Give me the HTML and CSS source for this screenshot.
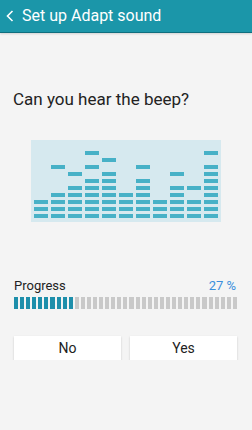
FILE: index.html
```html
<!DOCTYPE html>
<html>
<head>
    <title>Set up Adapt sound</title>
    <meta charset="UTF-8">
    <meta name="viewport" content="width=device-width, initial-scale=1.0">
    <link rel="stylesheet" href="styles.css">
</head>
<body>
    <div class="header">
        <svg class="back" width="10" height="12" viewBox="0 0 10 12">
            <path d="M7.5 1 L2.5 6 L7.5 11" fill="none" stroke="#fff" stroke-width="1.6"/>
        </svg>
        <span class="header-title">Set up Adapt sound</span>
    </div>

    <div class="content">
        <h1 class="question">Can you hear the beep?</h1>

        <div class="equalizer" id="equalizer"></div>

        <div class="progress-label">
            <span>Progress</span>
            <span class="percent">27 %</span>
        </div>
        <div class="progress" id="progress"></div>

        <div class="buttons">
            <button class="btn">No</button>
            <button class="btn">Yes</button>
        </div>
    </div>

    <script>
        // filled rows (from bottom) for each column
        var columns = [
            [0, 1, 2],
            [0, 1, 2, 3, 7],
            [0, 1, 2, 3, 4, 6],
            [0, 1, 2, 3, 4, 5, 7, 9],
            [0, 1, 2, 3, 4, 5, 6, 8],
            [0, 1, 2, 3],
            [0, 1, 2, 3, 4, 5, 7],
            [0, 1, 2],
            [0, 1, 2, 3, 4, 6],
            [0, 1, 2, 4],
            [0, 1, 2, 3, 4, 5, 6, 7, 9]
        ];
        var eq = document.getElementById('equalizer');
        columns.forEach(function(rows) {
            var col = document.createElement('div');
            col.className = 'eq-col';
            for (var i = 0; i < 10; i++) {
                var cell = document.createElement('div');
                cell.className = rows.indexOf(i) >= 0 ? 'eq-cell on' : 'eq-cell';
                col.appendChild(cell);
            }
            eq.appendChild(col);
        });

        var progress = document.getElementById('progress');
        for (var s = 0; s < 37; s++) {
            var seg = document.createElement('div');
            seg.className = s < 10 ? 'seg done' : 'seg';
            progress.appendChild(seg);
        }
    </script>
</body>
</html>
```

FILE: styles.css
```css
body {
    font-family: Roboto, 'Liberation Sans', sans-serif;
    margin: 0;
    background-color: #f4f4f4;
    color: #222;
}
.header {
    height: 32px;
    background-color: #1b96a9;
    border-bottom: 1px solid #0f6e7e;
    display: flex;
    align-items: center;
    padding-left: 5px;
    box-shadow: 0 1px 2px rgba(0, 0, 0, 0.15);
}
.back {
    margin-right: 7px;
}
.header-title {
    color: #fff;
    font-size: 16px;
    line-height: 20px;
}
.content {
    padding: 0 15px 0 14px;
}
.question {
    font-size: 17px;
    font-weight: normal;
    line-height: 20px;
    margin: 56px 0 0 -1px;
}
.equalizer {
    width: 190px;
    height: 82px;
    box-sizing: border-box;
    margin: 31px auto 0 17px;
    padding: 11px 0 4px;
    background-color: #d6e9ef;
    display: flex;
    justify-content: center;
    gap: 3px;
}
.eq-col {
    width: 14px;
    display: flex;
    flex-direction: column-reverse;
    gap: 3px;
}
.eq-cell {
    height: 4px;
}
.eq-cell.on {
    background-color: #47b1c7;
}
.progress-label {
    display: flex;
    justify-content: space-between;
    font-size: 13px;
    line-height: 16px;
    margin-top: 56px;
}
.percent {
    color: #3a8fdc;
    padding-right: 1px;
}
.progress {
    display: flex;
    gap: 2px;
    height: 12px;
    margin-top: 3px;
}
.seg {
    flex: 1;
    background-color: #c9c9c9;
}
.seg.done {
    background-color: #1e8fab;
}
.buttons {
    display: flex;
    gap: 9px;
    margin-top: 27px;
}
.btn {
    flex: 1;
    height: 24px;
    border: none;
    background-color: #fff;
    box-shadow: 0 1px 2px rgba(0, 0, 0, 0.18);
    font-family: Roboto, 'Liberation Sans', sans-serif;
    font-size: 14px;
    color: #222;
    padding: 0;
}
```
